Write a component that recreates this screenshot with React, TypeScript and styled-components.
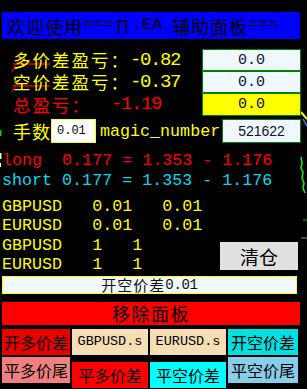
import React from 'react';
import styled, { createGlobalStyle } from 'styled-components';

const CJK = `"Noto Sans CJK SC", "Liberation Sans", sans-serif`;
const MONO = `"Liberation Mono", "Noto Sans CJK SC", monospace`;
const SANS = `"Liberation Sans", "Noto Sans CJK SC", sans-serif`;

const GlobalStyle = createGlobalStyle`
  html, body {
    margin: 0;
    padding: 0;
    background: #000;
  }
  body {
    font-family: ${SANS};
  }
`;

const Page = styled.div`
  position: relative;
  width: 307px;
  height: 389px;
  overflow: hidden;
  background: #000;
`;

// chart lines showing through from behind the panel
const ChartLayer = styled.svg`
  position: absolute;
  left: 0;
  top: 0;
  width: 307px;
  height: 389px;
  pointer-events: none;
`;

const Panel = styled.div`
  position: relative;
  display: flex;
  flex-direction: column;
  padding: 12px 0 0 2px;
`;

const TitleBar = styled.div`
  width: 298px;
  height: 27px;
  box-sizing: border-box;
  padding-left: 5px;
  background: #0000ff;
  color: #000;
  display: flex;
  align-items: center;
  white-space: pre;
  font-family: ${CJK};
  font-size: 18px;
  letter-spacing: 1px;
  line-height: 1;
`;

const Half = styled.span`
  color: #000;
  font-family: ${MONO};
  font-size: 16.7px;
  letter-spacing: 0;
`;

const FullGlyph = styled.span`
  display: inline-block;
  width: 19px;
  color: #000;
  text-align: center;
  letter-spacing: 0;
`;

const Stats = styled.div`
  margin-top: 10px;
  width: 299px;
  display: grid;
  grid-template-columns: 1fr 99px;
  grid-template-rows: 22px 22px 23px;
`;

const StatLabel = styled.div<{ $color: string }>`
  display: flex;
  align-items: center;
  padding-left: 11px;
  color: ${(p) => p.$color};
  font-family: ${CJK};
  font-size: 17.5px;
  letter-spacing: 2px;
  line-height: 1;
  white-space: pre;
`;

const StatNum = styled.span`
  font-family: ${MONO};
  font-size: 19px;
  letter-spacing: -1.4px;
`;

const ValueBox = styled.div<{ $bg: string }>`
  box-sizing: border-box;
  border: 1px solid #008000;
  background: ${(p) => p.$bg};
  display: flex;
  align-items: center;
  justify-content: center;
  font-family: ${MONO};
  font-size: 15px;
  color: #101028;
`;

const ParamRow = styled.div`
  margin-top: 3px;
  width: 299px;
  height: 24px;
  display: flex;
  align-items: center;
`;

const ParamLabel = styled.span`
  padding-left: 11px;
  color: #ffff00;
  font-family: ${CJK};
  font-size: 18px;
  letter-spacing: 1px;
  line-height: 1;
`;

const LotInput = styled.div`
  box-sizing: border-box;
  width: 45px;
  height: 24px;
  padding-left: 5px;
  background: #fff;
  border: 1px solid #ffff00;
  display: flex;
  align-items: center;
  font-family: ${MONO};
  font-size: 12px;
  color: #000;
`;

const MagicLabel = styled.span`
  margin-left: 4px;
  color: #ffff00;
  font-family: ${MONO};
  font-size: 16.7px;
`;

const MagicBox = styled.div`
  margin-left: auto;
  box-sizing: border-box;
  width: 79px;
  height: 24px;
  border: 1px solid #008000;
  background: #f0f8ff;
  display: flex;
  align-items: center;
  justify-content: center;
  font-family: ${SANS};
  font-size: 14px;
  color: #101028;
`;

const CalcBlock = styled.div`
  margin-top: 8px;
`;

const CalcLine = styled.div<{ $color: string }>`
  height: 20px;
  line-height: 20px;
  color: ${(p) => p.$color};
  font-family: ${MONO};
  font-size: 16.7px;
  white-space: pre;
`;

const PairsArea = styled.div`
  margin-top: 5.7px;
  width: 296px;
  display: flex;
  align-items: flex-end;
`;

const PairRows = styled.div`
  flex: 1;
`;

const PairRow = styled.div`
  height: 19.5px;
  line-height: 19.5px;
  color: #ffff00;
  font-family: ${MONO};
  font-size: 16.7px;
  white-space: pre;
`;

const ClearButton = styled.div`
  width: 78px;
  height: 28px;
  margin-bottom: 4.7px;
  background: #e0e0e0;
  display: flex;
  align-items: center;
  justify-content: center;
  font-family: ${CJK};
  font-size: 19px;
  color: #000;
`;

const ShortBar = styled.div`
  margin-top: 1.3px;
  box-sizing: border-box;
  width: 295px;
  height: 18px;
  border: 1px solid #ffff00;
  background: #f0f8ff;
  display: flex;
  align-items: center;
  justify-content: center;
  font-family: ${CJK};
  font-size: 15px;
  letter-spacing: 1px;
  color: #111;
  line-height: 1;
`;

const SmallNum = styled.span`
  font-family: ${MONO};
  font-size: 14px;
  letter-spacing: -0.3px;
`;

const RemoveBar = styled.div`
  margin-top: 8px;
  width: 298px;
  height: 23px;
  background: #ff0000;
  display: flex;
  align-items: center;
  justify-content: center;
  font-family: ${CJK};
  font-size: 18px;
  letter-spacing: 1.5px;
  color: #000;
`;

const ButtonGrid = styled.div`
  margin-top: 4px;
  display: grid;
  grid-template-columns: 68px 76px 76px 70px;
  column-gap: 2px;
  align-items: start;
`;

const ActionButton = styled.div<{ $bg: string; $offset?: number; $latin?: boolean }>`
  height: 26px;
  margin-top: ${(p) => p.$offset ?? 0}px;
  background: ${(p) => p.$bg};
  display: flex;
  align-items: center;
  justify-content: center;
  color: #000;
  font-family: ${(p) => (p.$latin ? MONO : CJK)};
  font-size: ${(p) => (p.$latin ? '13.5px' : '16px')};
  white-space: nowrap;
`;

const pairs = [
  'GBPUSD   0.01   0.01',
  'EURUSD   0.01   0.01',
  'GBPUSD   1   1',
  'EURUSD   1   1',
];

export default function App() {
  return (
    <Page>
      <GlobalStyle />
      <ChartLayer viewBox="0 0 307 389">
        <line x1="13" y1="64" x2="50" y2="64" stroke="#e00000" strokeWidth="1.5" />
        <line x1="20" y1="58" x2="12" y2="72" stroke="#e00000" strokeWidth="1.2" />
        <line x1="13" y1="86" x2="50" y2="86" stroke="#e00000" strokeWidth="1.5" />
        <line x1="18" y1="80" x2="12" y2="92" stroke="#e00000" strokeWidth="1.2" />
        <rect x="0" y="130" width="1.5" height="6" fill="#00d000" />
        <rect x="0" y="153" width="1.5" height="6" fill="#ffff80" />
        <rect x="0" y="163" width="1" height="4" fill="#ffffff" />
        <line x1="301" y1="112" x2="307" y2="119" stroke="#ffff00" strokeWidth="2" />
        <line x1="303" y1="119" x2="307" y2="126" stroke="#1e90ff" strokeWidth="1.5" />
        <polyline
          points="301,157 302,163 301,168 303,172 302,178 304,183 303,188 305,193"
          fill="none"
          stroke="#00ff00"
          strokeWidth="1.5"
        />
        <line x1="303" y1="220" x2="307" y2="220" stroke="#00c000" strokeWidth="1" />
        <line x1="301" y1="238" x2="307" y2="238" stroke="#8090a0" strokeWidth="1" />
      </ChartLayer>
      <Panel>
        <TitleBar>
          欢迎使用<Half>===</Half>
          <FullGlyph>П</FullGlyph>
          <Half>.EA </Half>辅助面板<Half>===</Half>
        </TitleBar>

        <Stats>
          <StatLabel $color="#ffff00">
            多价差盈亏：<StatNum>-0.82</StatNum>
          </StatLabel>
          <ValueBox $bg="#f0f8ff">0.0</ValueBox>
          <StatLabel $color="#ffff00">
            空价差盈亏：<StatNum>-0.37</StatNum>
          </StatLabel>
          <ValueBox $bg="#f0f8ff">0.0</ValueBox>
          <StatLabel $color="#ff0000">
            总盈亏：<StatNum>  -1.19</StatNum>
          </StatLabel>
          <ValueBox $bg="#ffff00">0.0</ValueBox>
        </Stats>

        <ParamRow>
          <ParamLabel>手数</ParamLabel>
          <LotInput>0.01</LotInput>
          <MagicLabel>magic_number</MagicLabel>
          <MagicBox>521622</MagicBox>
        </ParamRow>

        <CalcBlock>
          <CalcLine $color="#ff0000">long  0.177 = 1.353 - 1.176</CalcLine>
          <CalcLine $color="#00dcf0">short 0.177 = 1.353 - 1.176</CalcLine>
        </CalcBlock>

        <PairsArea>
          <PairRows>
            {pairs.map((row, i) => (
              <PairRow key={i}>{row}</PairRow>
            ))}
          </PairRows>
          <ClearButton>清仓</ClearButton>
        </PairsArea>

        <ShortBar>
          开空价差<SmallNum>0.01</SmallNum>
        </ShortBar>

        <RemoveBar>移除面板</RemoveBar>

        <ButtonGrid>
          <ActionButton $bg="#e60000">开多价差</ActionButton>
          <ActionButton $bg="#f5deb3" $latin>GBPUSD.s</ActionButton>
          <ActionButton $bg="#f5deb3" $latin>EURUSD.s</ActionButton>
          <ActionButton $bg="#00e0e0">开空价差</ActionButton>
          <ActionButton $bg="#f08080" $offset={2}>平多价尾</ActionButton>
          <ActionButton $bg="#ff0000" $offset={7}>平多价差</ActionButton>
          <ActionButton $bg="#00ffff" $offset={7}>平空价差</ActionButton>
          <ActionButton $bg="#87ceeb" $offset={2}>平空价尾</ActionButton>
        </ButtonGrid>
      </Panel>
    </Page>
  );
}
